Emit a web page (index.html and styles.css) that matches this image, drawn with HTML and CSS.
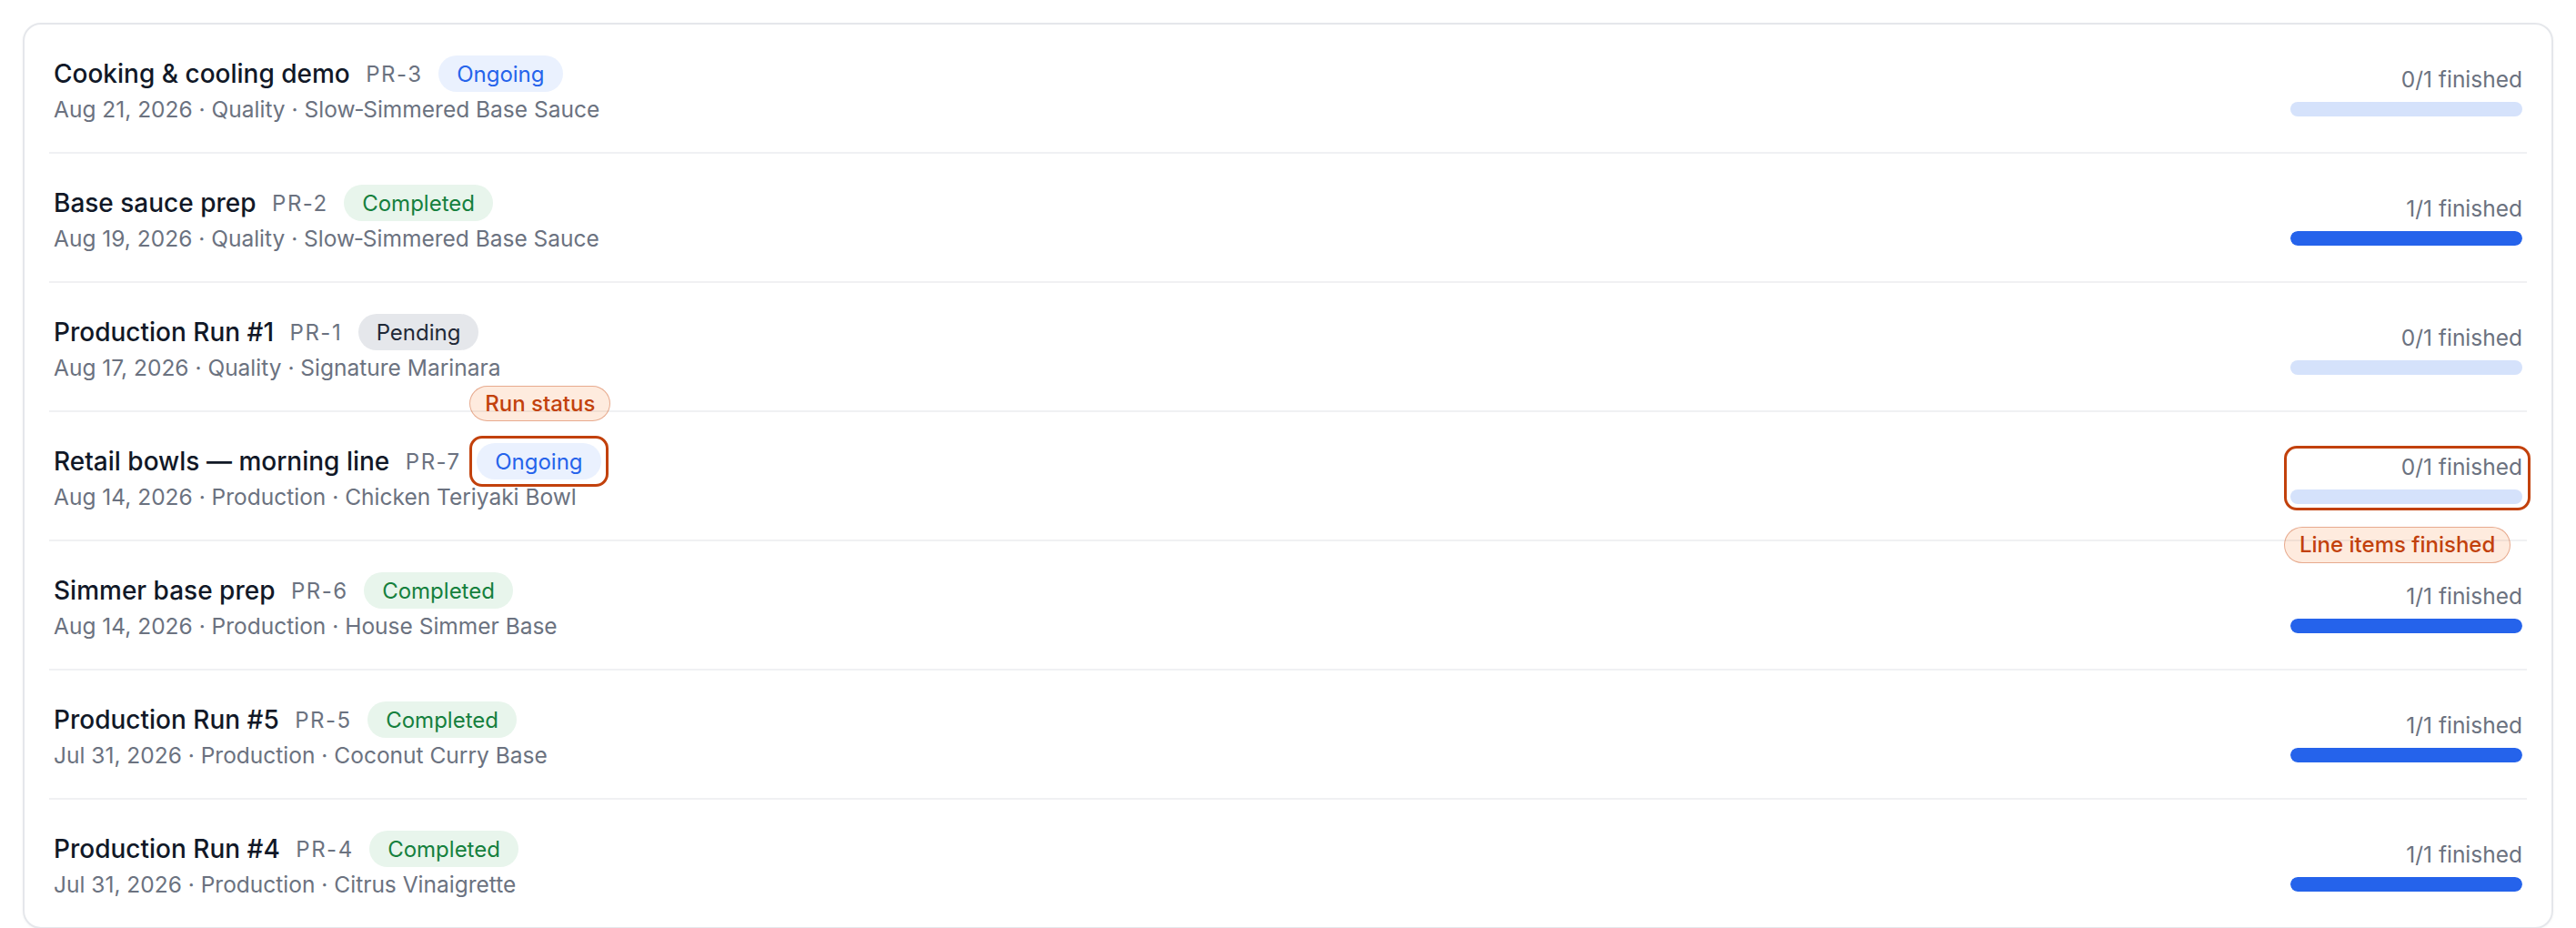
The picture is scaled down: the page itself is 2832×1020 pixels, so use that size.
FILE: index.html
```html
<!DOCTYPE html>
<html lang="en">
<head>
    <meta charset="UTF-8">
    <title>Production Runs</title>
    <link rel="stylesheet" href="styles.css">
</head>
<body>

<div class="card">
    <ul class="runs">
        <li class="run">
            <div class="run-main">
                <div class="run-title">
                    <span class="run-name">Cooking &amp; cooling demo</span>
                    <span class="run-code">PR-3</span>
                    <span class="badge ongoing">Ongoing</span>
                </div>
                <div class="run-meta">Aug 21, 2026 · Quality · Slow‑Simmered Base Sauce</div>
            </div>
            <div class="run-progress">
                <div class="progress-label">0/1 finished</div>
                <div class="bar"><div class="fill" style="width: 0%"></div></div>
            </div>
        </li>
        <li class="run">
            <div class="run-main">
                <div class="run-title">
                    <span class="run-name">Base sauce prep</span>
                    <span class="run-code">PR-2</span>
                    <span class="badge completed">Completed</span>
                </div>
                <div class="run-meta">Aug 19, 2026 · Quality · Slow‑Simmered Base Sauce</div>
            </div>
            <div class="run-progress">
                <div class="progress-label">1/1 finished</div>
                <div class="bar"><div class="fill" style="width: 100%"></div></div>
            </div>
        </li>
        <li class="run">
            <div class="run-main">
                <div class="run-title">
                    <span class="run-name">Production Run #1</span>
                    <span class="run-code">PR-1</span>
                    <span class="badge pending">Pending</span>
                </div>
                <div class="run-meta">Aug 17, 2026 · Quality · Signature Marinara</div>
            </div>
            <div class="run-progress">
                <div class="progress-label">0/1 finished</div>
                <div class="bar"><div class="fill" style="width: 0%"></div></div>
            </div>
        </li>
        <li class="run">
            <div class="run-main">
                <div class="run-title">
                    <span class="run-name">Retail bowls — morning line</span>
                    <span class="run-code">PR-7</span>
                    <span class="badge ongoing callout-target">Ongoing
                        <span class="callout-box"></span>
                        <span class="callout-tag tag-above">Run status</span>
                    </span>
                </div>
                <div class="run-meta">Aug 14, 2026 · Production · Chicken Teriyaki Bowl</div>
            </div>
            <div class="run-progress callout-target">
                <div class="progress-label">0/1 finished</div>
                <div class="bar"><div class="fill" style="width: 0%"></div></div>
                <span class="callout-box box-progress"></span>
                <span class="callout-tag tag-below">Line items finished</span>
            </div>
        </li>
        <li class="run">
            <div class="run-main">
                <div class="run-title">
                    <span class="run-name">Simmer base prep</span>
                    <span class="run-code">PR-6</span>
                    <span class="badge completed">Completed</span>
                </div>
                <div class="run-meta">Aug 14, 2026 · Production · House Simmer Base</div>
            </div>
            <div class="run-progress">
                <div class="progress-label">1/1 finished</div>
                <div class="bar"><div class="fill" style="width: 100%"></div></div>
            </div>
        </li>
        <li class="run">
            <div class="run-main">
                <div class="run-title">
                    <span class="run-name">Production Run #5</span>
                    <span class="run-code">PR-5</span>
                    <span class="badge completed">Completed</span>
                </div>
                <div class="run-meta">Jul 31, 2026 · Production · Coconut Curry Base</div>
            </div>
            <div class="run-progress">
                <div class="progress-label">1/1 finished</div>
                <div class="bar"><div class="fill" style="width: 100%"></div></div>
            </div>
        </li>
        <li class="run">
            <div class="run-main">
                <div class="run-title">
                    <span class="run-name">Production Run #4</span>
                    <span class="run-code">PR-4</span>
                    <span class="badge completed">Completed</span>
                </div>
                <div class="run-meta">Jul 31, 2026 · Production · Citrus Vinaigrette</div>
            </div>
            <div class="run-progress">
                <div class="progress-label">1/1 finished</div>
                <div class="bar"><div class="fill" style="width: 100%"></div></div>
            </div>
        </li>
    </ul>
</div>

</body>
</html>
```

FILE: styles.css
```css
body {
    font-family: Inter, 'Noto Sans', sans-serif;
    background-color: #ffffff;
    color: #111827;
    margin: 0;
    padding: 25px;
}
.card {
    border: 2px solid #e5e7eb;
    border-radius: 20px;
    background: white;
    box-shadow: 0 1px 3px rgba(0,0,0,0.04);
}
.runs {
    list-style: none;
    margin: 0 27px;
    padding: 0;
}
.run {
    display: flex;
    align-items: center;
    justify-content: space-between;
    padding: 33px 5px 29px;
    border-bottom: 2px solid #f0f1f3;
}
.run:last-child {
    border-bottom: none;
}
.run-title {
    display: flex;
    align-items: center;
    gap: 17.5px;
    height: 42px;
    margin-bottom: 1px;
}
.run-name {
    font-size: 28px;
    font-weight: 500;
    line-height: 42px;
}
.run-code {
    font-size: 24px;
    letter-spacing: 1.5px;
    color: #6b7280;
    line-height: 35px;
}
.run-meta {
    font-size: 24.5px;
    line-height: 35px;
    color: #6b7280;
}

/* status pills */
.badge {
    font-size: 24px;
    font-weight: 400;
    line-height: 35px;
    padding: 2.5px 20px;
    border-radius: 999px;
}
.ongoing {
    background-color: #eaf1fe;
    color: #2563eb;
}
.completed {
    background-color: #e8f5ec;
    color: #15803d;
}
.pending {
    background-color: #e5e7eb;
    color: #1f2937;
}

/* progress column */
.run-progress {
    width: 255px;
    text-align: right;
}
.progress-label {
    font-size: 24.5px;
    line-height: 35px;
    color: #6b7280;
    margin-bottom: 7px;
}
.bar {
    height: 16px;
    border-radius: 8px;
    background-color: #d5e2fb;
    overflow: hidden;
}
.fill {
    height: 100%;
    background-color: #2563eb;
    border-radius: 8px;
}

/* annotation overlays */
.callout-target {
    position: relative;
}
.callout-box {
    position: absolute;
    inset: -8px;
    border: 3.5px solid #c2410c;
    border-radius: 14px;
}
.box-progress {
    inset: -6px -9px -7px -7px;
}
.callout-tag {
    position: absolute;
    white-space: nowrap;
    font-size: 24px;
    font-weight: 500;
    line-height: 35px;
    padding: 1.25px 16px;
    color: #c2410c;
    background-color: rgba(249, 115, 22, 0.14);
    border: 1.75px solid rgba(194, 65, 12, 0.38);
    border-radius: 999px;
    text-align: left;
}
.tag-above {
    left: -8px;
    bottom: calc(100% + 24px);
}
.tag-below {
    left: -7px;
    top: calc(100% + 25px);
}
```
